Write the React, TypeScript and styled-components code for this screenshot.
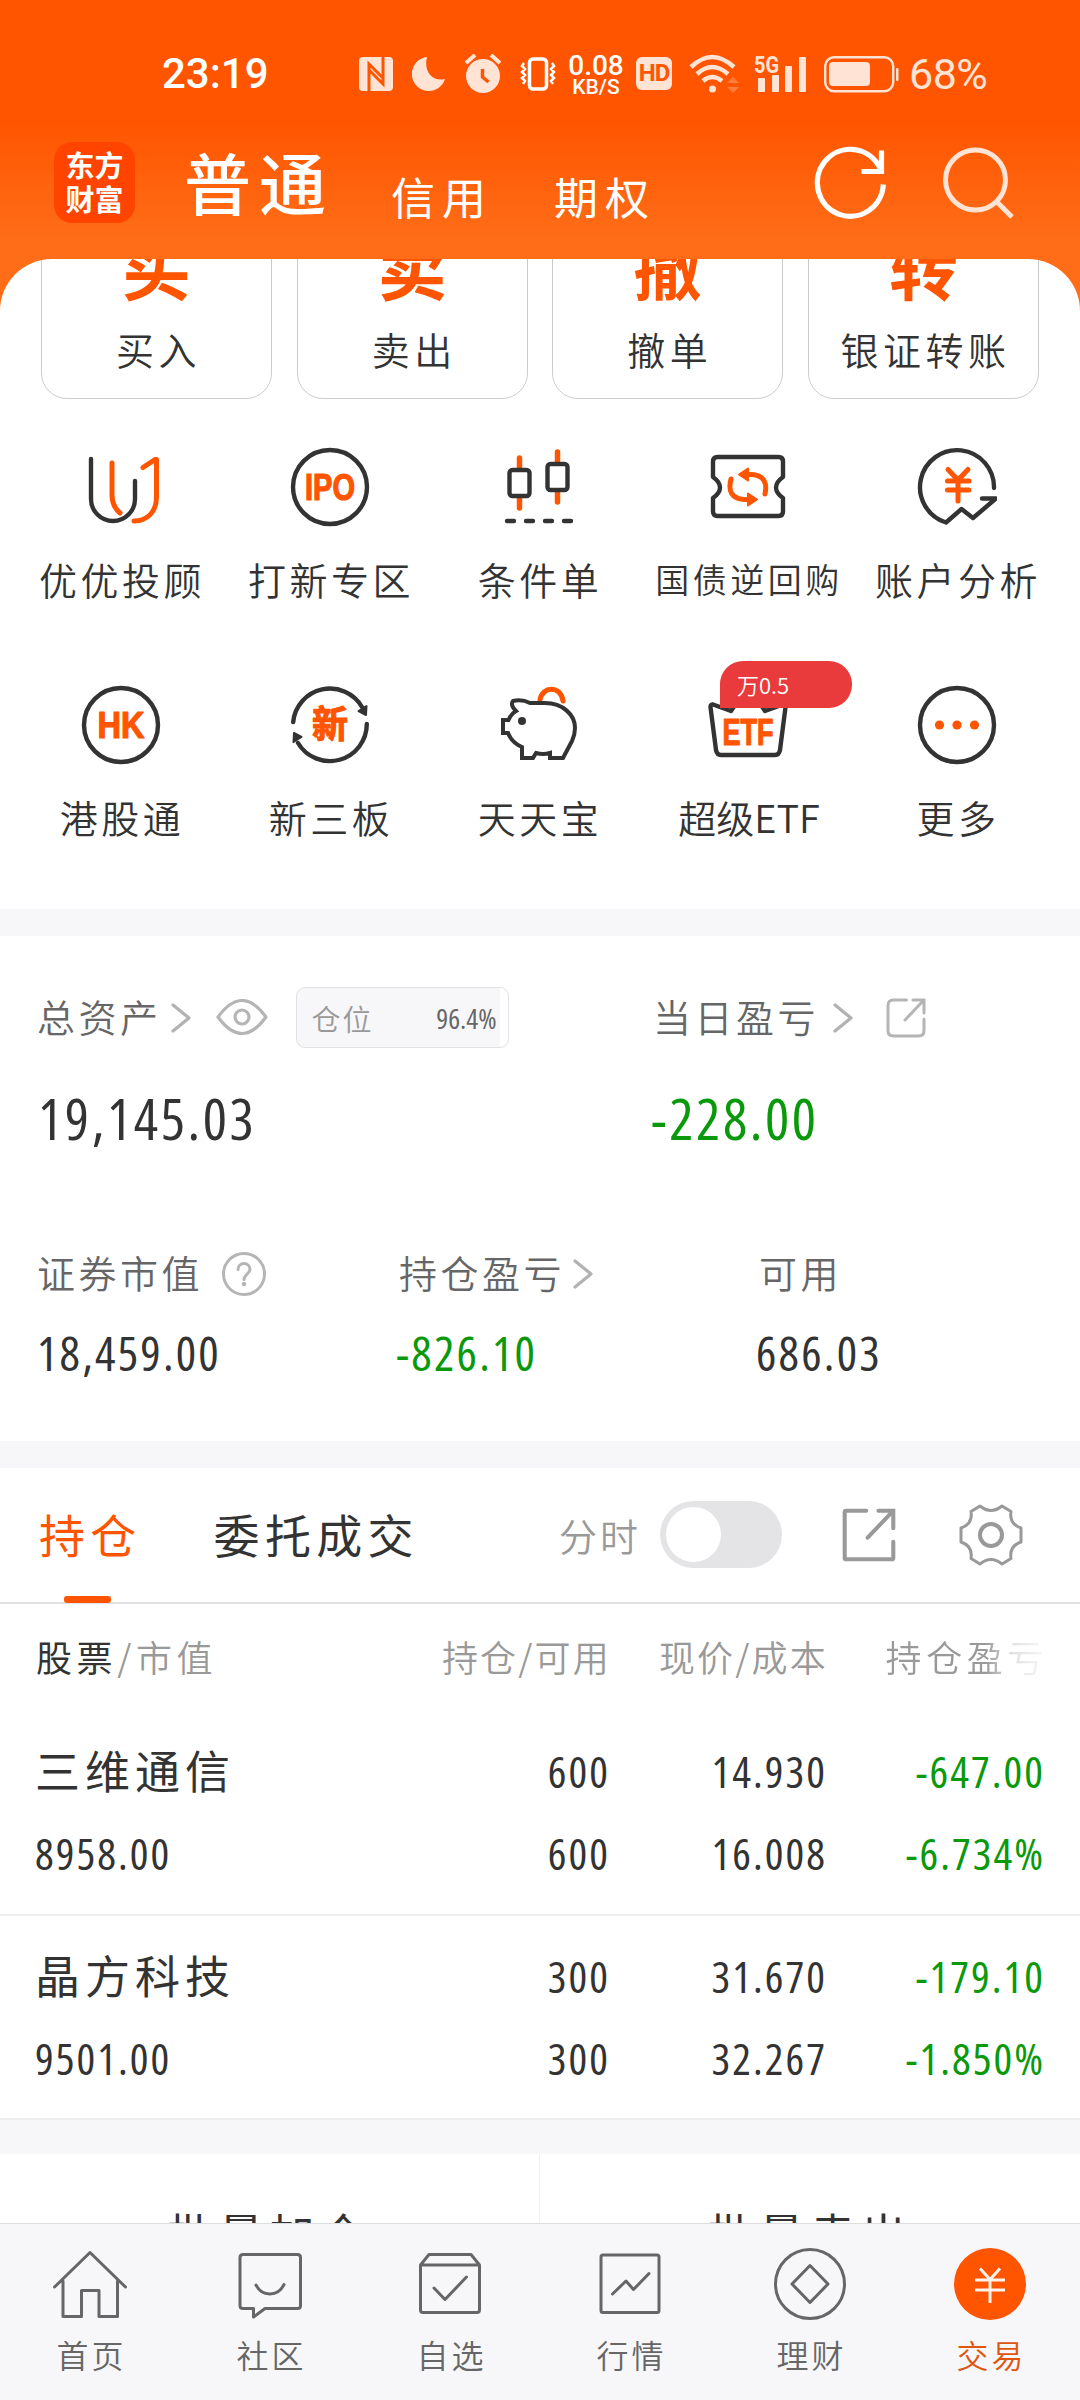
import React from 'react';
import styled, { createGlobalStyle } from 'styled-components';

const ORANGE = '#ff5500';
const INK = '#333333';
const GREEN = '#0a990a';
const SOFT = '#ffe4d6';

const GlobalStyle = createGlobalStyle`
  * { box-sizing: border-box; }
  body {
    margin: 0;
    background: #ffffff;
    color: ${INK};
    font-family: 'Noto Sans CJK SC', sans-serif;
    font-weight: 350;
  }
  svg { display: block; flex: none; }
`;

const Screen = styled.div`
  width: 1080px;
  height: 2400px;
  display: flex;
  flex-direction: column;
  overflow: hidden;
  background: #ffffff;
`;

const Hero = styled.div`
  flex: none;
  background: linear-gradient(180deg, #ff5500 0, #ff5500 120px, #ff6d18 240px, #ff6d18 320px);
`;

/* ---------- status bar ---------- */

const StatusBar = styled.div`
  height: 120px;
  padding: 27px 89px 0 162px;
  display: flex;
  align-items: center;
  justify-content: space-between;
  font-family: Roboto, sans-serif;
  color: #ffffff;
`;

const Clock = styled.div`
  font-size: 42px;
  font-weight: 500;
  line-height: 50px;
`;

const StatusIcons = styled.div`
  display: flex;
  align-items: center;
`;

const Speed = styled.div`
  width: 60px;
  margin: 3px 10px 0 10px;
  text-align: center;
  font-weight: 500;
  font-size: 28px;
  line-height: 24px;
`;

const SpeedUnit = styled.div`
  font-size: 21px;
  line-height: 19px;
`;

const HdBadge = styled.div`
  width: 36px;
  height: 33px;
  border-radius: 6px;
  background: ${SOFT};
  color: ${ORANGE};
  font-weight: 700;
  font-size: 24px;
  letter-spacing: -1px;
  line-height: 33px;
  text-align: center;
`;

const Percent = styled.div`
  margin-left: 10px;
  width: 82px;
  color: ${SOFT};
  font-size: 43px;
  font-weight: 400;
  line-height: 50px;
  letter-spacing: -0.5px;
`;

/* ---------- header ---------- */

const Header = styled.div`
  height: 139px;
  padding: 0 66px 0 54px;
  display: flex;
  align-items: flex-start;
  color: #ffffff;
`;

const Logo = styled.div`
  width: 81px;
  height: 81px;
  margin-top: 22px;
  padding-top: 5px;
  border-radius: 18px;
  background: #ff4400;
  font-weight: 700;
  font-size: 29px;
  line-height: 34px;
  text-align: center;
`;

const ModeTab = styled.div<{ $main?: boolean; $left: number }>`
  margin-left: ${p => p.$left}px;
  margin-top: ${p => (p.$main ? 13 : 44)}px;
  font-size: ${p => (p.$main ? 67 : 44)}px;
  line-height: ${p => (p.$main ? 96 : 64)}px;
  letter-spacing: ${p => (p.$main ? 8 : 7)}px;
  font-weight: ${p => (p.$main ? 500 : 400)};
`;

const HeaderTools = styled.div`
  margin-left: auto;
  margin-top: 25px;
  display: flex;
  gap: 51px;
`;

/* ---------- shortcuts ---------- */

const Sheet = styled.div`
  border-radius: 52px 52px 0 0;
  background: #ffffff;
  overflow: hidden;
  height: 650px;
`;

const ActionRow = styled.div`
  height: 140px;
  padding: 0 41px;
  display: flex;
  justify-content: space-between;
  align-items: flex-end;
  overflow: hidden;
`;

const ActionCard = styled.div`
  width: 231px;
  height: 200px;
  border: 1px solid #cccccc;
  border-radius: 26px;
  display: flex;
  flex-direction: column;
  justify-content: flex-end;
  align-items: center;
`;

const ActionGlyph = styled.div`
  font-size: 69px;
  font-weight: 700;
  line-height: 80px;
  color: ${ORANGE};
`;

const ActionLabel = styled.div`
  margin: 16px 0 21px;
  font-size: 38px;
  line-height: 56px;
  letter-spacing: 4.5px;
  padding-left: 4px;
`;

const Grid = styled.div`
  display: grid;
  grid-template-columns: repeat(5, 1fr);
  grid-auto-rows: 238px;
  padding: 48px 19px 0 16px;
`;

const GridItem = styled.div`
  position: relative;
  display: flex;
  flex-direction: column;
  align-items: center;
`;

const GridLabel = styled.div<{ $tight?: boolean; $plain?: boolean }>`
  margin-top: 24px;
  white-space: nowrap;
  font-size: ${p => (p.$tight ? 34 : 38)}px;
  line-height: 56px;
  letter-spacing: ${p => (p.$plain ? 0 : 3.5)}px;
  padding-left: 3px;
`;

const Flag = styled.div`
  position: absolute;
  left: 77px;
  top: -24px;
  width: 132px;
  height: 47px;
  padding-left: 17px;
  border-radius: 23px 23px 23px 0;
  background: #e93b3b;
  color: #ffffff;
  font-size: 22px;
  line-height: 46px;
`;

const Band = styled.div<{ $h: number }>`
  flex: none;
  height: ${p => p.$h}px;
  background: #f7f7fa;
`;

/* ---------- assets ---------- */

const Num = styled.div<{ $size: number; $color?: string; $compact?: boolean }>`
  font-family: 'Open Sans', sans-serif;
  font-stretch: ${p => (p.$compact ? 75 : 80)}%;
  font-weight: 370;
  font-size: ${p => p.$size}px;
  line-height: 60px;
  letter-spacing: ${p => (p.$compact ? 0 : 0.046)}em;
  margin-right: ${p => (p.$compact ? 0 : -0.046)}em;
  white-space: nowrap;
  color: ${p => p.$color ?? INK};
`;

const Assets = styled.div`
  flex: none;
  height: 505px;
  padding: 0 37px;
`;

const AssetTop = styled.div`
  display: grid;
  grid-template-columns: 613px 1fr;
  padding-top: 51px;
  height: 285px;
`;

const AssetBottom = styled.div`
  display: grid;
  grid-template-columns: 359px 360px 1fr;
  padding-top: 22px;
`;

const Caption = styled.div<{ $h: number }>`
  display: flex;
  align-items: center;
  height: ${p => p.$h}px;
`;

const CaptionText = styled.div`
  font-size: 38px;
  line-height: 56px;
  letter-spacing: 3.5px;
  color: #666666;
  margin-top: -4px;
`;

const Spacer = styled.div<{ $w: number }>`
  width: ${p => p.$w}px;
  flex: none;
`;

const Ratio = styled.div`
  width: 213px;
  height: 61px;
  margin-left: 28px;
  padding: 0 11px 0 15px;
  display: flex;
  align-items: center;
  justify-content: space-between;
  border: 1px solid #e2e2e4;
  border-radius: 9px;
  background: linear-gradient(90deg, #f7f7fa 96.4%, #ffffff 96.4%);
  font-size: 29px;
  letter-spacing: 2px;
  color: #999999;
`;

const BigValue = styled.div`
  padding: 40px 0 0 1px;
`;

const SmallValue = styled.div`
  padding-top: 19px;
`;

/* ---------- positions ---------- */

const Tabs = styled.div`
  flex: none;
  height: 136px;
  padding: 0 57px 0 39px;
  display: flex;
  border-bottom: 2px solid #e2e2e2;
`;

const Tab = styled.div<{ $active?: boolean }>`
  height: 135px;
  margin-right: 72px;
  display: flex;
  flex-direction: column;
  align-items: center;
  font-size: 46px;
  line-height: 130px;
  letter-spacing: 5.3px;
  font-weight: 400;
  color: ${p => (p.$active ? ORANGE : INK)};
`;

const TabMark = styled.div`
  width: 47px;
  height: 7px;
  margin-top: -2px;
  margin-left: -5px;
  border-radius: 3px;
  background: ${ORANGE};
`;

const TabTools = styled.div`
  margin-left: auto;
  display: flex;
  align-items: center;
  height: 133px;
`;

const ToolLabel = styled.div`
  font-size: 38px;
  letter-spacing: 3px;
  color: #999999;
`;

const Toggle = styled.div`
  width: 122px;
  height: 67px;
  margin: 0 60px 0 19px;
  padding: 6px;
  border-radius: 34px;
  background: #e4e4e6;
`;

const Knob = styled.div`
  width: 55px;
  height: 55px;
  border-radius: 50%;
  background: #ffffff;
`;

const tableColumns = '354px 218px 217px 1fr';

const TableHead = styled.div`
  flex: none;
  display: grid;
  grid-template-columns: ${tableColumns};
  height: 110px;
  padding: 0 37px 0 36px;
  line-height: 105px;
  font-size: 36px;
  color: #999999;
  white-space: nowrap;
`;

const HeadCell = styled.div<{ $right?: boolean; $wide?: boolean; $fade?: boolean }>`
  display: flex;
  justify-content: ${p => (p.$right ? 'flex-end' : 'flex-start')};
  letter-spacing: ${p => (p.$wide ? 4.6 : 2.2)}px;
  margin-right: ${p => (p.$right ? (p.$wide ? -5 : -3) : 0)}px;
  ${p =>
    p.$fade &&
    `
    -webkit-mask-image: linear-gradient(90deg, #000 72%, rgba(0,0,0,0.3) 84%, rgba(0,0,0,0.05));
    mask-image: linear-gradient(90deg, #000 72%, rgba(0,0,0,0.3) 84%, rgba(0,0,0,0.05));
  `}
`;

const Strong = styled.span`
  color: ${INK};
  font-weight: 400;
`;

const Holding = styled.div<{ $h: number; $top: number }>`
  flex: none;
  height: ${p => p.$h}px;
  padding: ${p => p.$top}px 37px 0 35px;
  display: grid;
  grid-template-columns: 355px 218px 217px 1fr;
  grid-auto-rows: 82px;
  border-bottom: 2px solid #eeeeee;
`;

const StockName = styled.div`
  font-size: 45px;
  font-weight: 400;
  line-height: 58px;
  letter-spacing: 5px;
`;

const Cell = styled.div<{ $right?: boolean }>`
  display: flex;
  justify-content: ${p => (p.$right ? 'flex-end' : 'flex-start')};
`;

/* ---------- batch actions ---------- */

const BatchRow = styled.div`
  flex: none;
  height: 69px;
  display: grid;
  grid-template-columns: 540px 1fr;
  overflow: hidden;
`;

const BatchButton = styled.div<{ $divided?: boolean }>`
  padding-top: 44px;
  text-align: center;
  font-size: 45px;
  font-weight: 400;
  line-height: 70px;
  letter-spacing: 6px;
  border-right: ${p => (p.$divided ? '1px solid #f0f0f2' : 'none')};
`;

/* ---------- bottom navigation ---------- */

const NavBar = styled.div`
  flex: none;
  height: 177px;
  display: grid;
  grid-template-columns: repeat(6, 1fr);
  border-top: 1px solid #dddddf;
  background: #f7f7fa;
`;

const NavItem = styled.div<{ $active?: boolean }>`
  padding-top: 23px;
  display: flex;
  flex-direction: column;
  align-items: center;
  color: ${p => (p.$active ? '#e0560f' : '#666666')};
`;

const NavLabel = styled.div`
  margin-top: 7px;
  font-size: 32px;
  line-height: 48px;
  letter-spacing: 3px;
  padding-left: 3px;
`;

/* ---------- icons ---------- */

const Nfc = () => (
  <svg width="34" height="36" viewBox="0 0 34 36">
    <rect y="1" width="34" height="34" rx="4" fill={SOFT} />
    <path d="M10 35V8l14 14M24 1v27L10 14" fill="none" stroke={ORANGE} strokeWidth="3" />
  </svg>
);

const Moon = () => (
  <svg width="34" height="36" viewBox="0 0 34 36">
    <path d="M15 1A17 17 0 1 0 33 23C22 26 11 17 15 1Z" fill={SOFT} />
  </svg>
);

const Alarm = () => (
  <svg width="36" height="40" viewBox="0 0 36 40">
    <circle cx="18" cy="22" r="17" fill={SOFT} />
    <path d="M1 9 10 1M26 1l9 8" stroke={SOFT} strokeWidth="4" />
    <path d="M17.500 15v8l6 5" fill="none" stroke={ORANGE} strokeWidth="3.500" />
  </svg>
);

const Vibrate = () => (
  <svg width="36" height="36" viewBox="0 0 36 36" fill="none" stroke="#fff">
    <rect x="9.500" y="3" width="17" height="30" rx="3.500" strokeWidth="3.500" />
    <path d="M4 7l-2 3 3 3-3 3 3 3-3 3 3 3-2 3M32 7l2 3-3 3 3 3-3 3 3 3-3 3 2 3" strokeWidth="2.500" />
  </svg>
);

const Wifi = () => (
  <svg width="50" height="40" viewBox="0 0 50 40" fill="none" stroke={SOFT} strokeWidth="4.500">
    <path d="M2 13Q23-7 45 13M8 20Q23 6 39 20M14 27Q23 19 33 27" />
    <circle cx="23.500" cy="35" r="3.500" fill={SOFT} stroke="none" />
    <path d="M38 29l6-6 6 6ZM38 33l6 6 6-6Z" fill="#ff7d3d" stroke="none" />
  </svg>
);

const Signal = () => (
  <svg width="54" height="40" viewBox="0 0 54 40" fill={SOFT}>
    <text x="0" y="19" fontFamily="Roboto, sans-serif" fontWeight="700" fontSize="23" textLength="25" lengthAdjust="spacingAndGlyphs">5G</text>
    <rect x="4" y="24" width="7" height="14" rx="1" />
    <rect x="18" y="21" width="7" height="17" rx="1" />
    <rect x="31" y="12" width="7" height="26" rx="1" />
    <rect x="45" y="3" width="7" height="35" rx="1" />
  </svg>
);

const Battery = () => (
  <svg width="75" height="38" viewBox="0 0 75 38">
    <rect x="1.200" y="2.200" width="68" height="34" rx="9" fill="none" stroke={SOFT} strokeWidth="2.400" />
    <rect x="5" y="7" width="41" height="24" rx="4" fill={SOFT} />
    <rect x="72" y="13" width="2.500" height="13" rx="1" fill={SOFT} />
  </svg>
);

const Refresh = () => (
  <svg width="76" height="76" viewBox="0 0 76 76" fill="none" stroke="#fff" strokeWidth="5.200">
    <path d="M70.300 39.500A33 33.500 0 1 1 65 19.500L69 26.500M68.500 5.500v21H48.500" />
  </svg>
);

const Search = () => (
  <svg width="74" height="76" viewBox="0 0 74 76" fill="none" stroke={SOFT} strokeWidth="5">
    <circle cx="35.500" cy="35" r="30" />
    <path d="M56 56l16 16" />
  </svg>
);

const Chevron = () => (
  <svg width="20" height="32" viewBox="0 0 20 32" fill="none" stroke="#b2b2b2" strokeWidth="3.200" strokeLinecap="round" strokeLinejoin="round">
    <path d="M2 3l16 13L2 29" />
  </svg>
);

const Eye = () => (
  <svg width="52" height="38" viewBox="0 0 52 38" fill="none" stroke="#b5b5b5" strokeWidth="3.200">
    <path d="M2 18Q26-15 50 18Q26 51 2 18Z" strokeLinejoin="round" />
    <circle cx="26" cy="18" r="7" />
  </svg>
);

const Help = () => (
  <svg width="46" height="46" viewBox="0 0 46 46" fill="none" stroke="#b5b5b5" strokeWidth="3">
    <circle cx="23" cy="23" r="20.500" />
    <path d="M17 18.500c0-8 12-8 12 0 0 4-6 5-6 10" strokeLinecap="round" />
    <circle cx="23" cy="33" r="2.200" fill="#b5b5b5" stroke="none" />
  </svg>
);

const Share = ({ size, color, round }: { size: number; color: string; round?: boolean }) => (
  <svg width={size} height={size} viewBox="0 0 40 40" fill="none" stroke={color} strokeWidth="3" strokeLinecap="round">
    <path
      d={round
        ? 'M20.500 2H7.500Q2 2 2 7.500V32.500Q2 38 7.500 38H32.500Q38 38 38 32.500V21'
        : 'M18 2H3Q2 2 2 3V37Q2 38 3 38H37Q38 38 38 37V25'}
    />
    <path d="M27 2H38V15M37 3L19 22" />
  </svg>
);

const Gear = () => (
  <svg width="64" height="64" viewBox="0 0 64 64" fill="none" stroke="#999" strokeWidth="3" strokeLinejoin="round">
    <path d="M21 3Q32 12 43 3L52 8.500Q50 21 62 25V39Q50 43 52 55.500L43 61Q32 52 21 61L12 55.500Q14 43 2 39V25Q14 21 12 8.500Z" />
    <circle cx="32" cy="32" r="11" strokeWidth="4" />
  </svg>
);

const gridSvg = {
  width: 80,
  height: 80,
  viewBox: '0 0 80 80',
  fill: 'none',
  stroke: INK,
  strokeWidth: 4.4,
  strokeLinecap: 'round' as const,
  strokeLinejoin: 'round' as const,
};

const Mark = ({ w, children, y = 53, size = 36 }: { w: number; children: string; y?: number; size?: number }) => (
  <text
    x={40 - w / 2}
    y={y}
    fontFamily="'Liberation Sans', 'Noto Sans CJK SC', sans-serif"
    fontWeight="700"
    fontSize={size}
    textLength={w}
    lengthAdjust="spacingAndGlyphs"
    fill={ORANGE}
    stroke={ORANGE}
    strokeWidth="1.200"
  >
    {children}
  </text>
);

const Advisor = () => (
  <svg {...gridSvg}>
    <path d="M10 12V52A22 22 0 0 0 54 52V34" />
    <path d="M31 16V48Q31 59 39 66M62 20.500L74 12.500H75.500V50C75.500 65 66 74 53 74" stroke={ORANGE} strokeWidth="5" />
  </svg>
);

const Ipo = () => (
  <svg {...gridSvg}>
    <circle cx="40" cy="40" r="37" />
    <Mark w={50}>IPO</Mark>
  </svg>
);

const Candles = () => (
  <svg {...gridSvg}>
    <path d="M20.500 11v10M20.500 50v11M58.500 5v10M58.500 44v11" stroke={ORANGE} strokeWidth="5.500" />
    <rect x="10.500" y="23" width="20" height="26" rx="3" />
    <rect x="48.500" y="17" width="20" height="26" rx="3" />
    <path d="M8 74h7M27 74h7M46 74h7M65 74h7" />
  </svg>
);

const Ticket = () => (
  <svg {...gridSvg}>
    <path d="M9.500 10H70.500Q75 10 75 14.500V30Q68 35 68 40.500Q68 46 75 51V64.500Q75 69 70.500 69H9.500Q5 69 5 64.500V51Q12 46 12 40.500Q12 35 5 30V14.500Q5 10 9.500 10Z" />
    <path d="M38 27.500H44Q61 29 57 47M23 32Q18 51 36 52.500H42" stroke={ORANGE} strokeWidth="5" />
    <path d="M31 27.500l9-6v12ZM49 52.500l-9-6v12Z" stroke={ORANGE} strokeWidth="2" fill={ORANGE} />
  </svg>
);

const Analysis = () => (
  <svg {...gridSvg}>
    <path d="M77 41A37 37 0 1 0 29 75.500L44.500 62L56 71L79 51.500H65" />
    <path d="M31 22.500L41 33L51 22.500M30.500 34H52M30.500 43H52M41 34V54" stroke={ORANGE} strokeWidth="5" />
  </svg>
);

const HongKong = () => (
  <svg {...gridSvg}>
    <circle cx="40" cy="40" r="37" />
    <Mark w={47}>HK</Mark>
  </svg>
);

const NewBoard = () => (
  <svg {...gridSvg}>
    <path d="M3.200 37A37 37 0 0 1 72 22M76.800 39A37 37 0 0 1 8 58" />
    <path d="M68.500 27l8-5-.500 9ZM11.500 53l-8 5 .500-9Z" fill={INK} strokeWidth="2" transform="translate(0 -1)" />
    <Mark w={36} size={37}>新</Mark>
  </svg>
);

const Piggy = () => (
  <svg {...gridSvg}>
    <path d="M41 15C43 1 62 0 64 16" stroke={ORANGE} strokeWidth="5" />
    <path
      strokeWidth="4"
      strokeLinejoin="miter"
      d="M17 26Q11 20 14 16Q23 14 31 18H46C64 18 76 30 76 43Q76 50 73 56L64 73H51V68Q44 70 37 68L34 73H23V62Q13 58 9 48H4V35H9.500Q12 29 17 26Z"
    />
    <circle cx="23" cy="36" r="4" fill={INK} stroke="none" />
  </svg>
);

const Etf = () => (
  <svg {...gridSvg}>
    <path d="M23 26L5 19.500Q2 19 2.600 23L8 65Q9 70 13 70H67Q71 70 72 65L77.400 23Q78 19 75 19.500L57 26L51 17H29Z" />
    <Mark w={51} y={60}>ETF</Mark>
  </svg>
);

const More = () => (
  <svg {...gridSvg}>
    <circle cx="40" cy="40" r="37" />
    <g fill={ORANGE} stroke="none">
      <circle cx="22.500" cy="40" r="4.600" />
      <circle cx="40" cy="40" r="4.600" />
      <circle cx="57.500" cy="40" r="4.600" />
    </g>
  </svg>
);

const navSvg = {
  width: 76,
  height: 76,
  viewBox: '0 0 76 76',
  fill: 'none',
  stroke: '#666666',
  strokeWidth: 3,
  strokeLinecap: 'round' as const,
  strokeLinejoin: 'round' as const,
};

const Home = () => (
  <svg {...navSvg}>
    <path d="M2.500 40L38 5.500L73.500 40M11 34V69.500H29.500V43.500H47V69.500H65.500V34" />
  </svg>
);

const Community = () => (
  <svg {...navSvg}>
    <path d="M11 7.500H65.500Q68.500 7.500 68.500 10.500V58.500Q68.500 61.500 65.500 61.500H33L21.500 70V61.500H11Q8 61.500 8 58.500V10.500Q8 7.500 11 7.500Z" />
    <path d="M24 38C30 50 46 50 52 37.500" />
  </svg>
);

const Favorites = () => (
  <svg {...navSvg}>
    <path d="M8.500 18L17 7.500H59L67.500 18V63Q67.500 65.500 65 65.500H11Q8.500 65.500 8.500 63ZM8.500 18H67.500M22 41L33 52.500L54.500 30" />
  </svg>
);

const Market = () => (
  <svg {...navSvg}>
    <rect x="9" y="8" width="58" height="57.500" rx="2" />
    <path d="M20.500 47L34 34L41.500 42.500L57 26.500" />
  </svg>
);

const Wealth = () => (
  <svg {...navSvg}>
    <circle cx="38" cy="37" r="34.500" />
    <path d="M38 18.500L56 37L38 55.500L20 37Z" />
  </svg>
);

const Trade = () => (
  <svg {...navSvg}>
    <circle cx="38" cy="37" r="36" fill={ORANGE} stroke="none" />
    <path d="M28 21.500L38 32.500L48 21.500M23 33H53M23 43H53M38 33V56" stroke="#fff2ea" strokeLinecap="butt" />
  </svg>
);

/* ---------- data ---------- */

const actions = [
  ['买', '买入'],
  ['卖', '卖出'],
  ['撤', '撤单'],
  ['转', '银证转账'],
];

const shortcuts: { icon: React.ReactNode; label: string; flag?: string }[] = [
  { icon: <Advisor />, label: '优优投顾' },
  { icon: <Ipo />, label: '打新专区' },
  { icon: <Candles />, label: '条件单' },
  { icon: <Ticket />, label: '国债逆回购' },
  { icon: <Analysis />, label: '账户分析' },
  { icon: <HongKong />, label: '港股通' },
  { icon: <NewBoard />, label: '新三板' },
  { icon: <Piggy />, label: '天天宝' },
  { icon: <Etf />, label: '超级ETF', flag: '万0.5' },
  { icon: <More />, label: '更多' },
];

const holdings = [
  { name: '三维通信', value: '8958.00', qty: ['600', '600'], price: ['14.930', '16.008'], profit: ['-647.00', '-6.734%'] },
  { name: '晶方科技', value: '9501.00', qty: ['300', '300'], price: ['31.670', '32.267'], profit: ['-179.10', '-1.850%'] },
];

const nav: [React.ReactNode, string][] = [
  [<Home />, '首页'],
  [<Community />, '社区'],
  [<Favorites />, '自选'],
  [<Market />, '行情'],
  [<Wealth />, '理财'],
  [<Trade />, '交易'],
];

const Figure = ({ children, color, right }: { children: string; color?: string; right?: boolean }) => (
  <Cell $right={right}>
    <Num $size={44} $color={color}>{children}</Num>
  </Cell>
);

export default function App() {
  return (
    <Screen>
      <GlobalStyle />
      <Hero>
        <StatusBar>
          <Clock>23:19</Clock>
          <StatusIcons>
            <Nfc />
            <Spacer $w={19} />
            <Moon />
            <Spacer $w={19} />
            <Alarm />
            <Spacer $w={19} />
            <Vibrate />
            <Speed>
              0.08
              <SpeedUnit>KB/S</SpeedUnit>
            </Speed>
            <HdBadge>HD</HdBadge>
            <Spacer $w={17} />
            <Wifi />
            <Spacer $w={15} />
            <Signal />
            <Spacer $w={16} />
            <Battery />
            <Percent>68%</Percent>
          </StatusIcons>
        </StatusBar>
        <Header>
          <Logo>
            东方
            <br />
            财富
          </Logo>
          <ModeTab $main $left={49}>普通</ModeTab>
          <ModeTab $left={57}>信用</ModeTab>
          <ModeTab $left={61}>期权</ModeTab>
          <HeaderTools>
            <Refresh />
            <Search />
          </HeaderTools>
        </Header>
        <Sheet>
          <ActionRow>
            {actions.map(([glyph, label]) => (
              <ActionCard key={label}>
                <ActionGlyph>{glyph}</ActionGlyph>
                <ActionLabel>{label}</ActionLabel>
              </ActionCard>
            ))}
          </ActionRow>
          <Grid>
            {shortcuts.map(s => (
              <GridItem key={s.label}>
                {s.icon}
                <GridLabel $tight={s.label.length === 5 && !s.flag} $plain={!!s.flag}>{s.label}</GridLabel>
                {s.flag && <Flag>{s.flag}</Flag>}
              </GridItem>
            ))}
          </Grid>
        </Sheet>
      </Hero>
      <Band $h={27} />
      <Assets>
        <AssetTop>
          <div>
            <Caption $h={61}>
              <CaptionText>总资产</CaptionText>
              <Spacer $w={9} />
              <Chevron />
              <Spacer $w={25} />
              <Eye />
              <Ratio>
                仓位
                <Num $size={28} $color="#666666" $compact>96.4%</Num>
              </Ratio>
            </Caption>
            <BigValue>
              <Num $size={57}>19,145.03</Num>
            </BigValue>
          </div>
          <div>
            <Caption $h={61}>
              <Spacer $w={3} />
              <CaptionText>当日盈亏</CaptionText>
              <Spacer $w={14} />
              <Chevron />
              <Spacer $w={33} />
              <Share size={40} color="#b5b5b5" round />
            </Caption>
            <BigValue>
              <Num $size={57} $color={GREEN}>-228.00</Num>
            </BigValue>
          </div>
        </AssetTop>
        <AssetBottom>
          <div>
            <Caption $h={61}>
              <CaptionText>证券市值</CaptionText>
              <Spacer $w={18} />
              <Help />
            </Caption>
            <SmallValue>
              <Num $size={48}>18,459.00</Num>
            </SmallValue>
          </div>
          <div>
            <Caption $h={61}>
              <Spacer $w={3} />
              <CaptionText>持仓盈亏</CaptionText>
              <Spacer $w={8} />
              <Chevron />
            </Caption>
            <SmallValue>
              <Num $size={48} $color={GREEN}>-826.10</Num>
            </SmallValue>
          </div>
          <div>
            <Caption $h={61}>
              <Spacer $w={3} />
              <CaptionText>可用</CaptionText>
            </Caption>
            <SmallValue>
              <Num $size={48}>686.03</Num>
            </SmallValue>
          </div>
        </AssetBottom>
      </Assets>
      <Band $h={27} />
      <Tabs>
        <Tab $active>
          持仓
          <TabMark />
        </Tab>
        <Tab>委托成交</Tab>
        <TabTools>
          <ToolLabel>分时</ToolLabel>
          <Toggle>
            <Knob />
          </Toggle>
          <Share size={54} color="#999999" />
          <Spacer $w={63} />
          <Gear />
        </TabTools>
      </Tabs>
      <TableHead>
        <HeadCell $wide>
          <Strong>股票</Strong>/市值
        </HeadCell>
        <HeadCell $right>持仓/可用</HeadCell>
        <HeadCell $right>现价/成本</HeadCell>
        <HeadCell $right $wide $fade>持仓盈亏</HeadCell>
      </TableHead>
      {holdings.map((h, i) => (
        <Holding key={h.name} $h={i ? 204 : 202} $top={i ? 30 : 27}>
          <StockName>{h.name}</StockName>
          <Figure right>{h.qty[0]}</Figure>
          <Figure right>{h.price[0]}</Figure>
          <Figure right color={GREEN}>{h.profit[0]}</Figure>
          <Figure>{h.value}</Figure>
          <Figure right>{h.qty[1]}</Figure>
          <Figure right>{h.price[1]}</Figure>
          <Figure right color={GREEN}>{h.profit[1]}</Figure>
        </Holding>
      ))}
      <Band $h={34} />
      <BatchRow>
        <BatchButton $divided>批量加仓</BatchButton>
        <BatchButton>批量卖出</BatchButton>
      </BatchRow>
      <NavBar>
        {nav.map(([icon, label], i) => (
          <NavItem key={label} $active={i === 5}>
            {icon}
            <NavLabel>{label}</NavLabel>
          </NavItem>
        ))}
      </NavBar>
    </Screen>
  );
}
